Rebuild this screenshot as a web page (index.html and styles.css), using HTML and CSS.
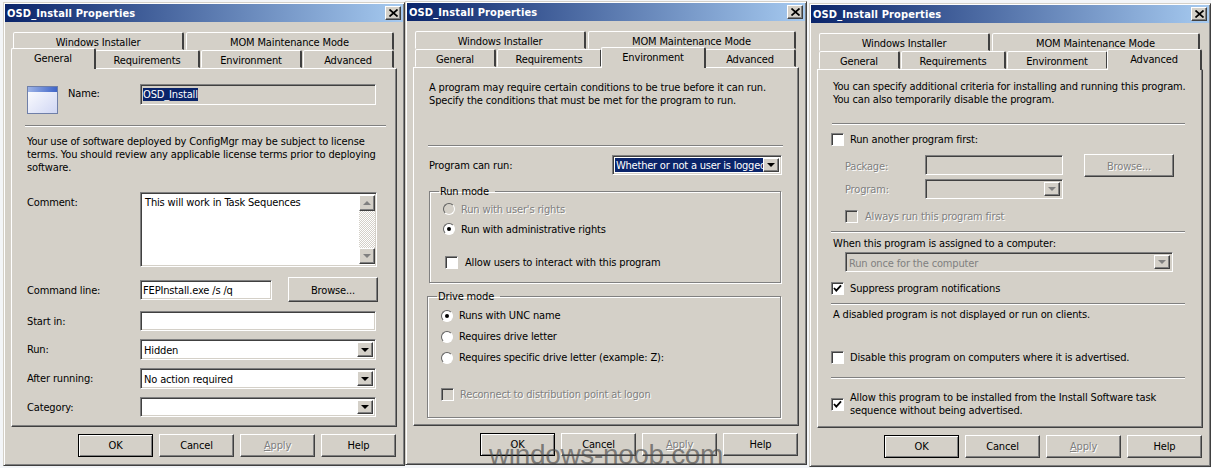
FILE: index.html
```html
<!DOCTYPE html>
<html lang="en">
<head>
<meta charset="utf-8">
<title>OSD_Install Properties</title>
<link rel="stylesheet" href="styles.css">
</head>
<body>
<main class="desktop">

<section class="window win-general">
  <header class="titlebar"><span class="title">OSD_Install Properties</span><span class="close"><svg width="9" height="8" viewBox="0 0 9 8"><path d="M0.5 0.5L8.5 7.5M8.5 0.5L0.5 7.5" stroke="#000" stroke-width="1.7" fill="none"/></svg></span></header>
  <div class="tabs">
    <div class="tabrow"><div class="tab t-wi">Windows Installer</div><div class="tab t-mom">MOM Maintenance Mode</div></div>
    <div class="tabrow tabrow-front"><div class="tab t-gen active">General</div><div class="tab t-req">Requirements</div><div class="tab t-env">Environment</div><div class="tab t-adv">Advanced</div></div>
  </div>
  <div class="panel panel-general">
    <div class="name-row">
      <svg class="app-icon" width="32" height="29" viewBox="0 0 32 29"><defs><linearGradient id="ig" x1="0" y1="0" x2="1" y2="1"><stop offset="0" stop-color="#fff"/><stop offset="1" stop-color="#cfd6f4"/></linearGradient><linearGradient id="ih" x1="0" y1="0" x2="1" y2="0"><stop offset="0" stop-color="#9db3e6"/><stop offset="1" stop-color="#3e64c8"/></linearGradient></defs><rect x="0.5" y="0.5" width="30" height="27" fill="url(#ig)" stroke="#6f7fa8"/><rect x="1" y="1" width="29" height="5" fill="url(#ih)"/></svg>
      <span class="lbl-name">Name:</span>
      <div class="field field-name"><span class="selected">OSD_Install</span></div>
    </div>
    <div class="sep sep-general"></div>
    <p class="text text-license">Your use of software deployed by ConfigMgr may be subject to license terms. You should review any applicable license terms prior to deploying software.</p>
    <div class="row row-comment">
      <span class="lbl lbl-top">Comment:</span>
      <div class="field field-area">
        <div class="area-text">This will work in Task Sequences</div>
        <div class="scrollbar"><span class="sbtn"><i class="arrow up"></i></span><span class="track"></span><span class="sbtn"><i class="arrow down"></i></span></div>
      </div>
    </div>
    <div class="row row-cmd">
      <span class="lbl">Command line:</span>
      <div class="field field-cmd">FEPInstall.exe /s /q</div>
      <div class="btn btn-browse">Browse...</div>
    </div>
    <div class="row row-start"><span class="lbl">Start in:</span><div class="field field-wide field-short"></div></div>
    <div class="row row-combo"><span class="lbl">Run:</span><div class="field field-wide combo"><span class="combo-val">Hidden</span><span class="sbtn"><i class="arrow down"></i></span></div></div>
    <div class="row row-combo"><span class="lbl">After running:</span><div class="field field-wide combo"><span class="combo-val">No action required</span><span class="sbtn"><i class="arrow down"></i></span></div></div>
    <div class="row row-combo"><span class="lbl">Category:</span><div class="field field-wide field-short combo"><span class="combo-val"></span><span class="sbtn"><i class="arrow down"></i></span></div></div>
  </div>
  <footer class="buttons"><div class="btn btn-foot default">OK</div><div class="btn btn-foot">Cancel</div><div class="btn btn-foot disabled"><span><u>A</u>pply</span></div><div class="btn btn-foot">Help</div></footer>
</section>

<section class="window win-env">
  <header class="titlebar"><span class="title">OSD_Install Properties</span><span class="close"><svg width="9" height="8" viewBox="0 0 9 8"><path d="M0.5 0.5L8.5 7.5M8.5 0.5L0.5 7.5" stroke="#000" stroke-width="1.7" fill="none"/></svg></span></header>
  <div class="tabs">
    <div class="tabrow"><div class="tab t-wi">Windows Installer</div><div class="tab t-mom">MOM Maintenance Mode</div></div>
    <div class="tabrow tabrow-front"><div class="tab t-gen">General</div><div class="tab t-req">Requirements</div><div class="tab t-env active">Environment</div><div class="tab t-adv">Advanced</div></div>
  </div>
  <div class="panel panel-env">
    <p class="text">A program may require certain conditions to be true before it can run.<br>Specify the conditions that must be met for the program to run.</p>
    <div class="sep sep-env"></div>
    <div class="row row-can">
      <span class="lbl-can">Program can run:</span>
      <div class="field combo field-can"><span class="combo-val selected-val">Whether or not a user is logged</span><span class="sbtn"><i class="arrow down"></i></span></div>
    </div>
    <fieldset class="group group-run">
      <legend>Run mode</legend>
      <div class="opt opt-run disabled-text"><i class="radio off"></i>Run with user's rights</div>
      <div class="opt opt-run"><i class="radio on"></i>Run with administrative rights</div>
      <div class="opt opt-allow"><i class="check"></i>Allow users to interact with this program</div>
    </fieldset>
    <fieldset class="group group-drive">
      <legend>Drive mode</legend>
      <div class="opt opt-drive"><i class="radio on"></i>Runs with UNC name</div>
      <div class="opt opt-drive"><i class="radio"></i>Requires drive letter</div>
      <div class="opt opt-drive"><i class="radio"></i>Requires specific drive letter (example: Z):</div>
      <div class="opt opt-drive opt-reconnect disabled-text"><i class="check off"></i>Reconnect to distribution point at logon</div>
    </fieldset>
  </div>
  <footer class="buttons"><div class="btn btn-foot default">OK</div><div class="btn btn-foot">Cancel</div><div class="btn btn-foot disabled"><span><u>A</u>pply</span></div><div class="btn btn-foot">Help</div></footer>
</section>

<section class="window win-adv">
  <header class="titlebar"><span class="title">OSD_Install Properties</span><span class="close"><svg width="9" height="8" viewBox="0 0 9 8"><path d="M0.5 0.5L8.5 7.5M8.5 0.5L0.5 7.5" stroke="#000" stroke-width="1.7" fill="none"/></svg></span></header>
  <div class="tabs">
    <div class="tabrow"><div class="tab t-wi">Windows Installer</div><div class="tab t-mom">MOM Maintenance Mode</div></div>
    <div class="tabrow tabrow-front"><div class="tab t-gen">General</div><div class="tab t-req">Requirements</div><div class="tab t-env">Environment</div><div class="tab t-adv active">Advanced</div></div>
  </div>
  <div class="panel panel-adv">
    <p class="text">You can specify additional criteria for installing and running this program.<br>You can also temporarily disable the program.</p>
    <div class="sep sep-a1"></div>
    <div class="cb cb-first"><i class="check"></i>Run another program first:</div>
    <div class="sub sub-package disabled-text"><span class="lbl-sub">Package:</span><div class="field field-sub"></div><div class="btn btn-browse btn-sub"><span>Browse...</span></div></div>
    <div class="sub sub-program disabled-text"><span class="lbl-sub lbl-prog">Program:</span><div class="field field-sub combo"><span class="combo-val"></span><span class="sbtn"><i class="arrow down grey"></i></span></div></div>
    <div class="cb cb-always disabled-text"><i class="check off"></i>Always run this program first</div>
    <div class="sep sep-a2"></div>
    <p class="text text-when">When this program is assigned to a computer:</p>
    <div class="field combo field-once"><span class="combo-val once-val">Run once for the computer</span><span class="sbtn"><i class="arrow down grey"></i></span></div>
    <div class="cb cb-suppress"><i class="check tick"><svg width="9" height="9" viewBox="0 0 9 9"><path d="M1 4L3.3 6.6L8 1.4" stroke="#000" stroke-width="1.8" fill="none"/></svg></i>Suppress program notifications</div>
    <div class="sep sep-a3"></div>
    <p class="text text-disabled">A disabled program is not displayed or run on clients.</p>
    <div class="cb cb-disable"><i class="check"></i>Disable this program on computers where it is advertised.</div>
    <div class="sep sep-a4"></div>
    <div class="cb cb-allow"><i class="check tick"><svg width="9" height="9" viewBox="0 0 9 9"><path d="M1 4L3.3 6.6L8 1.4" stroke="#000" stroke-width="1.8" fill="none"/></svg></i><span>Allow this program to be installed from the Install Software task<br>sequence without being advertised.</span></div>
  </div>
  <footer class="buttons"><div class="btn btn-foot default">OK</div><div class="btn btn-foot">Cancel</div><div class="btn btn-foot disabled"><span><u>A</u>pply</span></div><div class="btn btn-foot">Help</div></footer>
</section>

<div class="watermark">windows-noob.com</div>
</main>
</body>
</html>
```

FILE: styles.css
```css
* { box-sizing: border-box; }
html, body { margin: 0; padding: 0; }
body {
  width: 1211px;
  height: 468px;
  overflow: hidden;
  background: #f3f5f8;
  font-family: "DejaVu Sans Condensed", "DejaVu Sans", sans-serif;
  font-size: 11px;
  line-height: 13px;
  letter-spacing: -0.15px;
  color: #000;
}
.desktop { position: relative; width: 1211px; height: 468px; }

/* windows on the desktop */
.window {
  position: absolute;
  width: 402px;
  height: 464px;
  background: #d4d0c8;
  border: 1px solid;
  border-color: #d4d0c8 #404040 #404040 #d4d0c8;
  box-shadow: inset 1px 1px #fff, inset -1px -1px #808080;
  padding: 1px 1px 0;
  display: flex;
  flex-direction: column;
}
.win-general { left: 3px; top: 2px; }
.win-env { left: 405px; top: 1px; }
.win-adv { left: 809px; top: 3px; }

.titlebar {
  height: 18px;
  flex: none;
  display: flex;
  align-items: center;
  justify-content: space-between;
  padding: 0 2px 0 2px;
  background: linear-gradient(90deg, #0a246a, #a6caf0);
}
.title { color: #fff; font-weight: 700; letter-spacing: 0.14px; }
.close {
  width: 16px;
  height: 14px;
  display: flex;
  align-items: center;
  justify-content: center;
  background: #d4d0c8;
  border: 1px solid;
  border-color: #fff #404040 #404040 #fff;
  box-shadow: inset -1px -1px #808080;
}

/* tabs */
.tabs { flex: none; margin: 10px 6px 0; position: relative; z-index: 1; }
.tabrow { display: flex; height: 18px; padding-left: 2px; gap: 2px; }
.tabrow-front { gap: 1px; }
.tab {
  height: 18px;
  text-align: center;
  line-height: 19px;
  background: #d4d0c8;
  border: 1px solid;
  border-color: #fff #404040 transparent #fff;
  border-right-width: 2px;
  border-radius: 2px 2px 0 0;
}
.t-wi { width: 171px; }
.t-mom { width: 208px; }
.t-gen { width: 81px; }
.t-req { width: 105px; }
.t-env { width: 101px; }
.t-adv { width: 91px; }
.tab.active {
  height: 21px;
  margin: -2px -2px -1px;
  position: relative;
  line-height: 19px;
  border-bottom: 0;
}
.t-gen.active { width: 85px; }
.t-env.active { width: 105px; }
.t-adv.active { width: 95px; }

/* page panel */
.panel {
  flex: none;
  height: 359px;
  margin: 0 6px;
  padding-left: 15px;
  background: #d4d0c8;
  border: 1px solid;
  border-color: #fff #404040 #404040 #fff;
  box-shadow: inset -1px -1px #808080;
}
.panel .text { margin: 0; }
.sep { height: 2px; border-top: 1px solid #808080; border-bottom: 1px solid #fff; }

/* shared rows */
.row { display: flex; align-items: center; }
.lbl { width: 113px; flex: none; }
.lbl-top { align-self: flex-start; padding-top: 4px; }

.field {
  background: #fff;
  border: 1px solid;
  border-color: #808080 #fff #fff #808080;
  box-shadow: inset 1px 1px #404040, inset -1px -1px #d4d0c8;
  flex: none;
}
.field-wide { width: 236px; height: 21px; }
.field-short { height: 20px; }
.combo { display: flex; align-items: stretch; padding: 2px; }
.combo-val { flex: 1; min-width: 0; overflow: hidden; white-space: nowrap; padding-left: 1px; line-height: 17px; }
.sbtn {
  width: 16px;
  flex: none;
  display: flex;
  align-items: center;
  justify-content: center;
  background: #d4d0c8;
  border: 1px solid;
  border-color: #fff #404040 #404040 #fff;
  box-shadow: inset -1px -1px #808080;
}
.arrow { display: block; width: 0; height: 0; border-left: 4px solid transparent; border-right: 4px solid transparent; }
.arrow.down { border-top: 4px solid #000; }
.arrow.up { border-bottom: 4px solid #808080; }
.scrollbar .arrow.down, .arrow.grey { border-top-color: #808080; }

.btn {
  display: flex;
  align-items: center;
  justify-content: center;
  flex: none;
  background: #d4d0c8;
  border: 1px solid;
  border-color: #fff #404040 #404040 #fff;
  box-shadow: inset -1px -1px #808080;
}
.btn-browse { width: 90px; height: 25px; margin-left: 16px; padding-top: 1px; }

/* General page */
.panel-general { padding-top: 15px; }
.name-row { display: flex; height: 31px; }
.app-icon { margin-top: 2px; margin-right: 9px; flex: none; }
.lbl-name { width: 72px; flex: none; padding-top: 3px; }
.field-name { width: 236px; height: 21px; background: #d4d0c8; padding: 3px 2px; line-height: 13px; }
.selected { background: #0a246a; color: #fff; display: inline-block; }
.sep-general { margin: 10px 10px 0 -2px; }
.panel .text-license { margin-top: 8px; width: 350px; }
.row-comment { margin-top: 18px; }
.field-area { width: 237px; height: 75px; display: flex; padding: 2px 0 2px 2px; }
.area-text { flex: 1; padding: 1px 0 0 2px; }
.scrollbar { width: 17px; display: flex; flex-direction: column; }
.scrollbar .sbtn { height: 16px; width: 16px; }
.track { flex: 1; width: 16px; background: repeating-conic-gradient(#d4d0c8 0 25%, #fff 0 50%) 0 0 / 2px 2px; }
.row-cmd { margin-top: 10px; }
.row-cmd .lbl { padding-top: 1px; }
.field-cmd { width: 132px; height: 20px; padding: 3px 2px; }
.row-start { margin-top: 9px; }
.row-combo { margin-top: 8px; }

/* Environment page */
.panel-env { padding-top: 13px; }
.sep-env { margin: 38px 15px 0 -1px; }
.row-can { margin-top: 8px; }
.lbl-can { width: 183px; flex: none; }
.field-can { width: 170px; height: 20px; }
.selected-val { background: #0a246a; color: #fff; line-height: 15px; letter-spacing: -0.22px; }
.group {
  margin: 0;
  padding: 0;
  border: 1px solid #808080;
  box-shadow: inset 1px 1px #fff, 1px 1px #fff;
  min-width: 0;
}
.group legend { padding: 0 6px 0 1px; margin-left: 9px; }
.group-run { width: 352px; height: 98px; margin-top: 10px; padding: 1px 0 0; }
.group-drive { width: 354px; height: 128px; margin: 7px 0 0 -2px; padding: 2px 0 0; }
.opt { display: flex; align-items: center; white-space: nowrap; }
.opt-run { height: 20px; padding-left: 13px; }
.opt-allow { height: 20px; padding-left: 15px; margin-top: 13px; }
.opt-allow .check { margin-right: 7px; }
.opt-drive { height: 21px; padding-left: 13px; }
.opt-reconnect { margin-top: 16px; }
.opt-drive .check { margin-right: 6px; }

.radio {
  width: 12px;
  height: 12px;
  flex: none;
  border-radius: 50%;
  background: #fff;
  border: 1px solid;
  border-color: #606060 #fff #fff #606060;
  box-shadow: 0 0 0 1px #d4d0c8;
  margin-right: 6px;
  display: flex;
  align-items: center;
  justify-content: center;
}
.radio.off { background: #d4d0c8; }
.radio.on::after { content: ""; width: 4px; height: 4px; border-radius: 50%; background: #000; }
.check {
  width: 13px;
  height: 13px;
  flex: none;
  background: #fff;
  border: 1px solid;
  border-color: #808080 #fff #fff #808080;
  box-shadow: inset 1px 1px #404040;
  display: flex;
  align-items: center;
  justify-content: center;
}
.check.off { background: #d4d0c8; }
.disabled-text { color: #808080; text-shadow: 1px 1px #fff; }

/* Advanced page */
.panel-adv { padding-top: 10px; }
.sep-a1 { margin: 17px 17px 0 -1px; }
.cb { display: flex; align-items: center; white-space: nowrap; }
.cb .check { margin-right: 6px; }
.cb-first { height: 16px; margin: 6px 0 0 -2px; }
.sub { display: flex; align-items: flex-start; }
.sub-package { margin: 7px 0 0 12px; height: 23px; }
.sub-program { margin: 2px 0 0 12px; height: 20px; }
.lbl-sub { width: 80px; flex: none; padding-top: 6px; }
.lbl-prog { padding-top: 4px; }
.field-sub { width: 138px; height: 20px; background: #d4d0c8; margin-top: 1px; }
.sub-program .field-sub { margin-top: 0; }
.btn-sub { width: 90px; height: 23px; margin-left: 21px; }
.cb-always { height: 16px; margin: 9px 0 0 12px; }
.cb-always .check { margin-right: 7px; }
.sep-a2 { margin: 7px 17px 0 -2px; }
.panel .text-when { margin-top: 4px; }
.field-once { width: 328px; height: 20px; margin: 2px 0 0 12px; background: #d4d0c8; }
.once-val { color: #808080; }
.cb-suppress { height: 16px; margin: 8px 0 0 -2px; }
.sep-a3 { margin: 7px 17px 0 -2px; }
.panel .text-disabled { margin-top: 3px; }
.cb-disable { height: 16px; margin: 28px 0 0 -2px; }
.sep-a4 { margin: 12px 17px 0 -2px; }
.cb-allow { margin: 12px 0 0 -2px; line-height: 13px; }

/* footer buttons */
.buttons { flex: none; margin: 7px 7px 0 0; display: flex; justify-content: flex-end; gap: 6px; }
.btn-foot { width: 75px; height: 23px; }
.btn-foot.default { border-color: #000; box-shadow: inset 1px 1px #fff, inset -1px -1px #808080; }
.btn-foot.disabled { color: #808080; text-shadow: 1px 1px #fff; }

.watermark {
  position: absolute;
  left: 489px;
  top: 439px;
  font-family: "Liberation Sans", Arial, sans-serif;
  font-size: 28px;
  line-height: 32px;
  letter-spacing: -0.35px;
  color: rgba(70, 70, 70, 0.65);
  white-space: nowrap;
  z-index: 5;
}
```
